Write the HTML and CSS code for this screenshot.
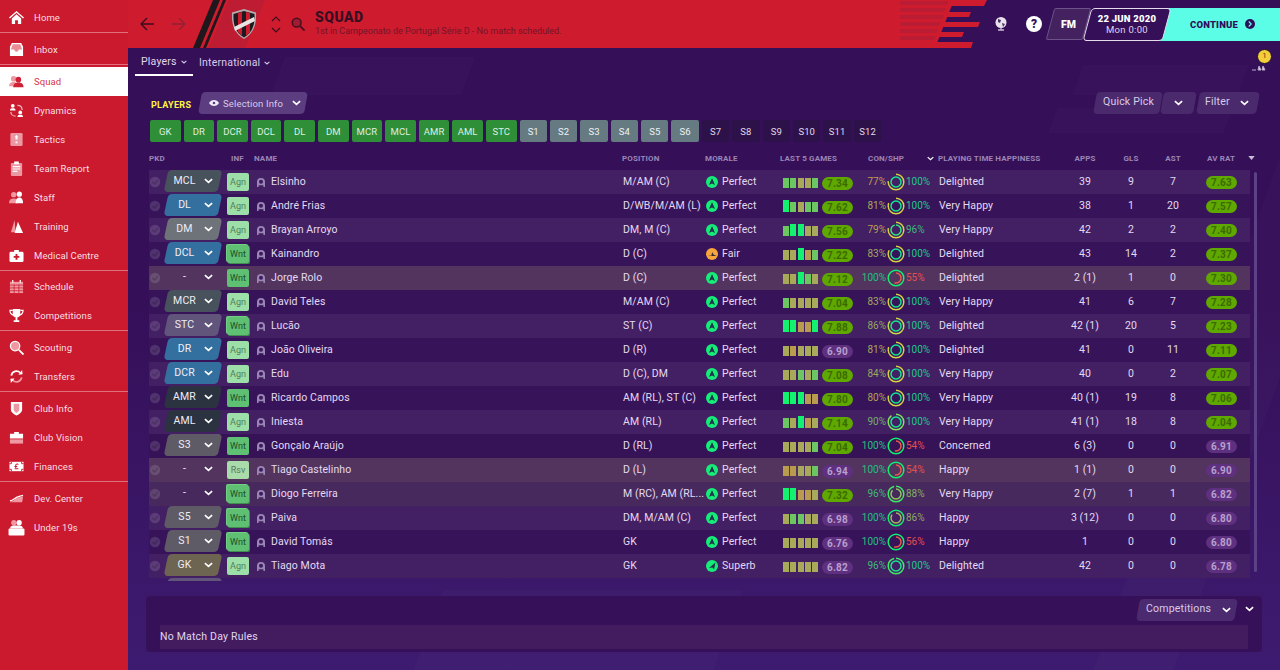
FILE: index.html
```html
<!DOCTYPE html>
<html lang="en">
<head>
<meta charset="utf-8">
<title>Squad</title>
<link rel="stylesheet" href="styles.css">
</head>
<body>
<svg class="defs" width="0" height="0" aria-hidden="true">
  <symbol id="chev" viewBox="0 0 10 6"><path d="M1 1l4 3.6L9 1" fill="none" stroke="currentColor" stroke-width="1.8"/></symbol>
  <symbol id="tick" viewBox="0 0 12 12"><circle cx="6" cy="6" r="5.200" fill="#fff" fill-opacity=".13"/><path d="M3.400 6l2 2 3.400-3.600" fill="none" stroke="#000" stroke-opacity=".22" stroke-width="1.200"/></symbol>
  <symbol id="head" viewBox="0 0 10 10"><path d="M1 10V5a4 4 0 0 1 8 0v5H7.400V8.200H2.600V10z" fill="#9a86b4"/><circle cx="5" cy="4.800" r="2" fill="#3c1a60"/></symbol>
  <symbol id="up" viewBox="0 0 12 12"><circle cx="6" cy="6" r="6" fill="#14ee78"/><path d="M6 2l3 7-3-1.400L3 9z" fill="#24304a"/></symbol>
  <symbol id="fair" viewBox="0 0 12 12"><circle cx="6" cy="6" r="6" fill="#f7a63c"/><path d="M1.500 8l4-.6.6-3.400 1.400 2.600 3 1.400z" fill="#3c2a3a"/></symbol>
  <symbol id="superb" viewBox="0 0 12 12"><circle cx="6" cy="6" r="6" fill="#14ee78"/><path d="M9.500 2.500L8 9.600 6.400 7.400 3 8z" fill="#24304a"/></symbol>
</svg>
<div class="app">
  <nav class="side">
    <div class="group first">
      <a class="item"><svg class="ic" viewBox="0 0 16 16"><path d="M8 1L0 8l1 1 7-6 7 6 1-1zM3 9v6h3.500v-4h3v4H13V9L8 4.600z" fill="#fff"/></svg><span>Home</span></a>
    </div>
    <div class="group">
      <a class="item"><svg class="ic" viewBox="0 0 16 16"><path d="M1 15V5l2-4h10l2 4v10z" fill="#fff"/><path d="M4 2.500h8L14 8h-3.600c-.4 1.600-1.200 2.300-2.400 2.300S6 9.600 5.600 8H2z" fill="#e88c96"/></svg><span>Inbox</span></a>
    </div>
    <div class="group squadgroup">
      <a class="item active"><svg class="ic" viewBox="0 0 16 16"><circle cx="5" cy="5" r="3" fill="#ef98a2"/><path d="M0 13c0-3 2-4.500 5-4.500S8 10 8 13z" fill="#ef98a2"/><circle cx="10" cy="6" r="3" fill="#d02035"/><path d="M4.500 14c0-3.500 2.500-5 5.500-5s5.500 1.500 5.500 5z" fill="#d02035"/></svg><span>Squad</span></a>
      <a class="item"><svg class="ic" viewBox="0 0 16 16"><circle cx="4" cy="3" r="2" fill="#fff"/><path d="M1 8c0-2 1-2.500 3-2.500S7 6 7 8z" fill="#fff"/><circle cx="12" cy="10" r="2" fill="#fff"/><path d="M9 15c0-2 1-2.500 3-2.500s3 .5 3 2.500z" fill="#fff"/><path d="M9 2.500c3 0 5 2 5 5M7 14c-3 0-5-2-5-4.500" fill="none" stroke="#f3b6bc" stroke-width="1.300"/></svg><span>Dynamics</span></a>
      <a class="item"><svg class="ic" viewBox="0 0 16 16"><rect x="1.500" y="1" width="13" height="14" rx="1.500" fill="#ec98a2"/><path d="M8 3l2 2.500H9V8H7V5.500H6zM7 10h2v2H7z" fill="#fff"/></svg><span>Tactics</span></a>
      <a class="item"><svg class="ic" viewBox="0 0 16 16"><rect x="2" y="2" width="12" height="14" rx="1" fill="#ec98a2"/><rect x="5.500" y="0.500" width="5" height="3" fill="#fff"/><path d="M4 6h8M4 8.500h8M4 11h5" stroke="#fff" stroke-width="1.200"/></svg><span>Team Report</span></a>
      <a class="item"><svg class="ic" viewBox="0 0 16 16"><circle cx="5" cy="5" r="2.800" fill="#ef98a2"/><path d="M0 14c0-3.500 2-5 5-5s4 1 4 5z" fill="#ef98a2"/><circle cx="11" cy="4.500" r="2.800" fill="#fff"/><path d="M7 14c0-4 1.500-6 4-6s4 2 4 6z" fill="#fff"/></svg><span>Staff</span></a>
      <a class="item"><svg class="ic" viewBox="0 0 16 16"><path d="M6 1l-4 13h5z" fill="#ef98a2"/><path d="M9.500 3L6 15h9z" fill="#fff"/></svg><span>Training</span></a>
      <a class="item"><svg class="ic" viewBox="0 0 16 16"><path d="M5.500 4V2h5v2H14a1.500 1.500 0 0 1 1.500 1.500v8A1.500 1.500 0 0 1 14 15H2a1.500 1.500 0 0 1-1.500-1.500v-8A1.500 1.500 0 0 1 2 4z" fill="#fff"/><path d="M7 6.500h2v2h2v2H9v2H7v-2H5v-2h2z" fill="#cb1a2d"/></svg><span>Medical Centre</span></a>
    </div>
    <div class="group">
      <a class="item"><svg class="ic" viewBox="0 0 16 16"><rect x="1" y="3" width="14" height="12" fill="#ef98a2"/><path d="M4 1v3M12 1v3" stroke="#fff" stroke-width="1.300"/><path d="M1 6.500h14M1 9.500h14M1 12.500h14M5.500 6v9M10.500 6v9" stroke="#cb1a2d" stroke-width=".8"/></svg><span>Schedule</span></a>
      <a class="item"><svg class="ic" viewBox="0 0 16 16"><path d="M4 1h8v5a4 4 0 0 1-8 0zM7 10h2v3h2v2H5v-2h2z" fill="#fff"/><path d="M4 2.500H1c0 3 1 4.500 3.500 5M12 2.500h3c0 3-1 4.500-3.500 5" fill="none" stroke="#fff" stroke-width="1.300"/></svg><span>Competitions</span></a>
    </div>
    <div class="group">
      <a class="item"><svg class="ic" viewBox="0 0 16 16"><circle cx="6.500" cy="6.500" r="5" fill="#ef98a2" stroke="#fff" stroke-width="1.300"/><path d="M10.500 10.500l5 5" stroke="#fff" stroke-width="2"/></svg><span>Scouting</span></a>
      <a class="item"><svg class="ic" viewBox="0 0 16 16"><path d="M2.500 7A5.500 5.500 0 0 1 12 4" fill="none" stroke="#fff" stroke-width="1.800"/><path d="M13.500 9A5.500 5.500 0 0 1 4 12" fill="none" stroke="#ef98a2" stroke-width="1.800"/><path d="M10 6l4.500-.5L14 1zM6 10l-4.500.5L2 15z" fill="#fff"/></svg><span>Transfers</span></a>
    </div>
    <div class="group">
      <a class="item"><svg class="ic" viewBox="0 0 16 16"><path d="M2 1h12v8c0 3-3 5-6 6.500C5 14 2 12 2 9z" fill="#fff"/><path d="M5 3h6v6c0 1.500-1.500 2.800-3 3.800C6.500 11.800 5 10.500 5 9z" fill="#ec98a2"/></svg><span>Club Info</span></a>
      <a class="item"><svg class="ic" viewBox="0 0 16 16"><path d="M5.500 4V2h5v2H15v5H1V4z" fill="#fff"/><path d="M1 10h14v4.500H1z" fill="#ef98a2"/></svg><span>Club Vision</span></a>
      <a class="item"><svg class="ic" viewBox="0 0 16 16"><rect x="0.500" y="3" width="15" height="10" fill="#fff"/><path d="M.5 5h2V3M15.500 5h-2V3M.5 11h2v2M15.500 11h-2v2" stroke="#cb1a2d" fill="none"/><path d="M10 6c-.5-1-2.500-1-2.800.4v3.200M5.800 8h3M6 10.500h4" stroke="#cb1a2d" fill="none" stroke-width="1.100"/></svg><span>Finances</span></a>
    </div>
    <div class="group last">
      <a class="item"><svg class="ic" viewBox="0 0 16 16"><path d="M1 11.500c4 0 5-3.500 9-4.500l5-1.500v1l-1 5.500H1z" fill="#ef98a2"/><path d="M1 10.500c4 0 5-3.500 9-4.500l5-1.500" fill="none" stroke="#fff" stroke-width="1.300"/></svg><span>Dev. Center</span></a>
      <a class="item"><svg class="ic wide" viewBox="0 0 16 16"><circle cx="5.500" cy="3.500" r="2.500" fill="#ef98a2"/><circle cx="10.500" cy="3.500" r="2.500" fill="#fff"/><path d="M2 9c0-2 1-3 3.500-3h5C13 6 14 7 14 9z" fill="#fff"/><rect x="0.500" y="9" width="15" height="6.500" rx="1" fill="#fff"/></svg><span>Under 19s</span></a>
    </div>
  </nav>

  <main class="main">
    <i class="deco d1"></i><i class="deco d2"></i><i class="deco d3"></i><i class="deco d4"></i><i class="deco d5"></i>
    <header class="top">
      <div class="red">
        <svg class="slash" viewBox="0 0 100 48" width="100" height="48"><path d="M16 48L36 0h36L52 48z" fill="#bd1c33"/><path d="M0 48L20 0h7L7 48zM10 48L30 0h3L13 48z" fill="#20171d"/></svg>
        <svg class="arrow" viewBox="0 0 16 16" width="16" height="16"><path d="M15 8H2M8 2L2 8l6 6" fill="none" stroke="#3d0d1c" stroke-width="1.400"/></svg>
        <svg class="arrow next" viewBox="0 0 16 16" width="16" height="16"><path d="M1 8h13M8 2l6 6-6 6" fill="none" stroke="#8f2234" stroke-width="1.300"/></svg>
        <svg class="crest" viewBox="0 0 26 32" width="26" height="32"><path d="M13 1l12 3.500c.5 10-1 20-12 26.500C2 24.500.5 14.500 1 4.500z" fill="#b5a9ad"/><path d="M13 3l10.500 3c.4 9-1 18-10.500 23.500C3.500 24 2.100 15 2.500 6z" fill="#1c1a1e"/><path d="M7 5l4-1v24l-4-4zM15 4l4 1v19l-4 4z" fill="#cf1b2e"/><path d="M3 19L23 9l1 4L4 23z" fill="#e8e4e4"/></svg>
        <div class="updown"><svg viewBox="0 0 10 6" width="10" height="6"><path d="M1 5l4-4 4 4" fill="none" stroke="#3d0d1c" stroke-width="1.200"/></svg><svg viewBox="0 0 10 6" width="10" height="6"><path d="M1 1l4 4 4-4" fill="none" stroke="#3d0d1c" stroke-width="1.200"/></svg></div>
        <svg class="search" viewBox="0 0 16 16" width="14" height="14"><circle cx="6.500" cy="6.500" r="5" fill="#a01c30" stroke="#4a0f1e" stroke-width="1.800"/><path d="M10.500 10.500l5 5" stroke="#4a0f1e" stroke-width="2.200"/></svg>
        <div class="heading"><h1>SQUAD</h1><p>1st in Campeonato de Portugal Série D - No match scheduled.</p></div>
      </div>
      <svg class="estripes" viewBox="0 0 90 48" width="90" height="48"><path d="M0 0h87l-3 6H0zM0 12h71l-2 5H0zM0 22h80l-2 5H0zM0 32h64l-2 5H0zM0 42h73l-2 6H0z" fill="#cf1b2e"/><path d="M0 0h54L35 48H0z" fill="#cf1b2e"/><path d="M0 1h48l-1 4H0zM0 8h46l-2 4H0zM0 15h44l-2 4H0zM0 22h41l-2 4H0zM0 29h38l-2 4H0zM0 36h36l-2 4H0z" fill="#b91c33"/></svg>
      <div class="tools">
        <svg class="globe" viewBox="0 0 16 16" width="16" height="16"><circle cx="8" cy="6.500" r="5.500" fill="#e8e2ee"/><path d="M5 3l3 1-1 3-2-1zM9 7l3 1-2 3z" fill="#4a3160"/><path d="M5 14h6M8 12v2" stroke="#c8bcd4" stroke-width="1.300"/></svg>
        <span class="help">?</span>
        <span class="fm">FM</span>
        <div class="date"><b>22 JUN 2020</b><span>Mon 0:00</span></div>
        <div class="continue"><b>CONTINUE</b><svg viewBox="0 0 12 12" width="10" height="10"><circle cx="6" cy="6" r="6" fill="#2d0f5a"/><path d="M4.500 3l3 3-3 3" fill="none" stroke="#5cfde6" stroke-width="1.400"/></svg></div>
      </div>
    </header>

    <div class="subnav">
      <a class="tab on">Players <svg class="c7"><use href="#chev"/></svg></a>
      <a class="tab">International <svg class="c7"><use href="#chev"/></svg></a>
      <div class="trophy"><svg viewBox="0 0 16 10" width="16" height="10"><path d="M1 9h4M7 9l1-4 2 4zM11 9l1-4 2 4z" stroke="#b6a8c8" fill="#e6dff0"/></svg><b>1</b></div>
    </div>

    <div class="toolbar">
      <span class="label">PLAYERS</span>
      <button class="btn sel"><svg viewBox="0 0 14 10" width="10" height="8"><path d="M0 5c3-5.500 11-5.500 14 0-3 5.500-11 5.500-14 0z" fill="#f0ebf5"/><circle cx="7" cy="5" r="1.800" fill="#5a3a7f"/></svg><span>Selection Info</span><svg class="c8"><use href="#chev"/></svg></button>
      <div class="spacer"></div>
      <button class="btn qp"><span>Quick Pick</span></button>
      <button class="btn qd"><svg class="c8"><use href="#chev"/></svg></button>
      <button class="btn fl"><span>Filter</span><svg class="c8"><use href="#chev"/></svg></button>
    </div>

    <div class="chips">
      <span class="chip g">GK</span><span class="chip g">DR</span><span class="chip g">DCR</span><span class="chip g">DCL</span><span class="chip g">DL</span><span class="chip g">DM</span><span class="chip g">MCR</span><span class="chip g">MCL</span><span class="chip g">AMR</span><span class="chip g">AML</span><span class="chip g">STC</span>
      <span class="chip s">S1</span><span class="chip s">S2</span><span class="chip s">S3</span><span class="chip s">S4</span><span class="chip s">S5</span><span class="chip s">S6</span>
      <span class="chip d">S7</span><span class="chip d">S8</span><span class="chip d">S9</span><span class="chip d">S10</span><span class="chip d">S11</span><span class="chip d">S12</span>
    </div>

    <div class="thead">
      <span>PKD</span><span>INF</span><span>NAME</span><span>POSITION</span><span>MORALE</span><span>LAST 5 GAMES</span><span>CON/SHP</span>
      <span class="sorted"><svg class="c7"><use href="#chev"/></svg>PLAYING TIME HAPPINESS</span>
      <span class="ctr">APPS</span><span class="ctr">GLS</span><span class="ctr">AST</span><span class="ctr">AV RAT</span>
      <svg class="caret" viewBox="0 0 8 5" width="7" height="4"><path d="M0 0h8L4 5z" fill="#c8bcd8"/></svg>
    </div>

    <div class="tablewrap">
    <div class="rows">

      <div class="row odd">
        <svg class="tick"><use href="#tick"/></svg><div class="pill slate"><span>MCL</span><svg class="c8"><use href="#chev"/></svg></div><span class="inf agn">Agn</span><svg class="hd"><use href="#head"/></svg><span class="name">Elsinho</span><span>M/AM (C)</span>
        <div class="morale"><svg><use href="#up"/></svg>Perfect</div>
        <div class="bars"><i class="m"></i><i class="m"></i><i class="y"></i><i class="y"></i><i class="m"></i></div><b class="rate hi">7.34</b>
        <span class="con" style="color:#c0a050">77%</span>
        <svg class="ring" viewBox="0 0 18 18"><circle cx="9" cy="9" r="7.800" pathLength="100" stroke-dasharray="77 100" stroke="#d8d040"/><circle cx="9" cy="9" r="4.700" pathLength="100" stroke-dasharray="100 100" stroke="#14e890"/></svg>
        <span class="shp" style="color:#20c888">100%</span><span>Delighted</span><span class="ctr">39</span><span class="ctr">9</span><span class="ctr">7</span><b class="rate av hi">7.63</b>
      </div>

      <div class="row">
        <svg class="tick"><use href="#tick"/></svg><div class="pill blue"><span>DL</span><svg class="c8"><use href="#chev"/></svg></div><span class="inf agn">Agn</span><svg class="hd"><use href="#head"/></svg><span class="name">André Frias</span><span>D/WB/M/AM (L)</span>
        <div class="morale"><svg><use href="#up"/></svg>Perfect</div>
        <div class="bars"><i class="t"></i><i class="m"></i><i class="y"></i><i class="m"></i><i class="m"></i></div><b class="rate hi">7.62</b>
        <span class="con" style="color:#a8a858">81%</span>
        <svg class="ring" viewBox="0 0 18 18"><circle cx="9" cy="9" r="7.800" pathLength="100" stroke-dasharray="81 100" stroke="#d8d040"/><circle cx="9" cy="9" r="4.700" pathLength="100" stroke-dasharray="100 100" stroke="#14e890"/></svg>
        <span class="shp" style="color:#20c888">100%</span><span>Very Happy</span><span class="ctr">38</span><span class="ctr">1</span><span class="ctr">20</span><b class="rate av hi">7.57</b>
      </div>

      <div class="row odd">
        <svg class="tick"><use href="#tick"/></svg><div class="pill grey"><span>DM</span><svg class="c8"><use href="#chev"/></svg></div><span class="inf agn">Agn</span><svg class="hd"><use href="#head"/></svg><span class="name">Brayan Arroyo</span><span>DM, M (C)</span>
        <div class="morale"><svg><use href="#up"/></svg>Perfect</div>
        <div class="bars"><i class="m"></i><i class="t"></i><i class="t"></i><i class="y"></i><i class="y"></i></div><b class="rate hi">7.56</b>
        <span class="con" style="color:#b8a050">79%</span>
        <svg class="ring" viewBox="0 0 18 18"><circle cx="9" cy="9" r="7.800" pathLength="100" stroke-dasharray="79 100" stroke="#d8d040"/><circle cx="9" cy="9" r="4.700" pathLength="100" stroke-dasharray="96 100" stroke="#30e880"/></svg>
        <span class="shp" style="color:#40b878">96%</span><span>Very Happy</span><span class="ctr">42</span><span class="ctr">2</span><span class="ctr">2</span><b class="rate av hi">7.40</b>
      </div>

      <div class="row">
        <svg class="tick"><use href="#tick"/></svg><div class="pill blue"><span>DCL</span><svg class="c8"><use href="#chev"/></svg></div><span class="inf wnt st">Wnt</span><svg class="hd"><use href="#head"/></svg><span class="name">Kainandro</span><span>D (C)</span>
        <div class="morale"><svg><use href="#fair"/></svg>Fair</div>
        <div class="bars"><i class="y"></i><i class="y"></i><i class="t"></i><i class="o"></i><i class="m"></i></div><b class="rate hi">7.22</b>
        <span class="con" style="color:#a0a860">83%</span>
        <svg class="ring" viewBox="0 0 18 18"><circle cx="9" cy="9" r="7.800" pathLength="100" stroke-dasharray="83 100" stroke="#d8d040"/><circle cx="9" cy="9" r="4.700" pathLength="100" stroke-dasharray="100 100" stroke="#14e890"/></svg>
        <span class="shp" style="color:#20c888">100%</span><span>Delighted</span><span class="ctr">43</span><span class="ctr">14</span><span class="ctr">2</span><b class="rate av hi">7.37</b>
      </div>

      <div class="row sel1">
        <svg class="tick"><use href="#tick"/></svg><div class="pill none"><span>-</span><svg class="c8"><use href="#chev"/></svg></div><span class="inf wnt">Wnt</span><svg class="hd"><use href="#head"/></svg><span class="name">Jorge Rolo</span><span>D (C)</span>
        <div class="morale"><svg><use href="#up"/></svg>Perfect</div>
        <div class="bars"><i class="y"></i><i class="y"></i><i class="t"></i><i class="m"></i><i class="y"></i></div><b class="rate hi">7.12</b>
        <span class="con" style="color:#20c080">100%</span>
        <svg class="ring" viewBox="0 0 18 18"><circle cx="9" cy="9" r="7.800" pathLength="100" stroke-dasharray="100 100" stroke="#14ee70"/><circle cx="9" cy="9" r="4.700" pathLength="100" stroke-dasharray="55 100" stroke="#f05848"/></svg>
        <span class="shp" style="color:#e05050">55%</span><span>Delighted</span><span class="ctr">2 (1)</span><span class="ctr">1</span><span class="ctr">0</span><b class="rate av hi">7.30</b>
      </div>

      <div class="row">
        <svg class="tick"><use href="#tick"/></svg><div class="pill slate"><span>MCR</span><svg class="c8"><use href="#chev"/></svg></div><span class="inf agn">Agn</span><svg class="hd"><use href="#head"/></svg><span class="name">David Teles</span><span>M/AM (C)</span>
        <div class="morale"><svg><use href="#up"/></svg>Perfect</div>
        <div class="bars"><i class="m"></i><i class="y"></i><i class="y"></i><i class="y"></i><i class="y"></i></div><b class="rate hi">7.04</b>
        <span class="con" style="color:#a0a860">83%</span>
        <svg class="ring" viewBox="0 0 18 18"><circle cx="9" cy="9" r="7.800" pathLength="100" stroke-dasharray="83 100" stroke="#d8d040"/><circle cx="9" cy="9" r="4.700" pathLength="100" stroke-dasharray="100 100" stroke="#14e890"/></svg>
        <span class="shp" style="color:#20c888">100%</span><span>Very Happy</span><span class="ctr">41</span><span class="ctr">6</span><span class="ctr">7</span><b class="rate av hi">7.28</b>
      </div>

      <div class="row odd">
        <svg class="tick"><use href="#tick"/></svg><div class="pill mauve"><span>STC</span><svg class="c8"><use href="#chev"/></svg></div><span class="inf wnt st">Wnt</span><svg class="hd"><use href="#head"/></svg><span class="name">Lucão</span><span>ST (C)</span>
        <div class="morale"><svg><use href="#up"/></svg>Perfect</div>
        <div class="bars"><i class="t"></i><i class="t"></i><i class="o"></i><i class="o"></i><i class="t"></i></div><b class="rate hi">7.88</b>
        <span class="con" style="color:#90a860">86%</span>
        <svg class="ring" viewBox="0 0 18 18"><circle cx="9" cy="9" r="7.800" pathLength="100" stroke-dasharray="86 100" stroke="#c8d848"/><circle cx="9" cy="9" r="4.700" pathLength="100" stroke-dasharray="100 100" stroke="#14e890"/></svg>
        <span class="shp" style="color:#20c888">100%</span><span>Delighted</span><span class="ctr">42 (1)</span><span class="ctr">20</span><span class="ctr">5</span><b class="rate av hi">7.23</b>
      </div>

      <div class="row">
        <svg class="tick"><use href="#tick"/></svg><div class="pill blue"><span>DR</span><svg class="c8"><use href="#chev"/></svg></div><span class="inf agn">Agn</span><svg class="hd"><use href="#head"/></svg><span class="name">João Oliveira</span><span>D (R)</span>
        <div class="morale"><svg><use href="#up"/></svg>Perfect</div>
        <div class="bars"><i class="y"></i><i class="o"></i><i class="y"></i><i class="y"></i><i class="y"></i></div><b class="rate lo">6.90</b>
        <span class="con" style="color:#a8a858">81%</span>
        <svg class="ring" viewBox="0 0 18 18"><circle cx="9" cy="9" r="7.800" pathLength="100" stroke-dasharray="81 100" stroke="#d8d040"/><circle cx="9" cy="9" r="4.700" pathLength="100" stroke-dasharray="100 100" stroke="#14e890"/></svg>
        <span class="shp" style="color:#20c888">100%</span><span>Delighted</span><span class="ctr">41</span><span class="ctr">0</span><span class="ctr">11</span><b class="rate av hi">7.11</b>
      </div>

      <div class="row odd">
        <svg class="tick"><use href="#tick"/></svg><div class="pill blue"><span>DCR</span><svg class="c8"><use href="#chev"/></svg></div><span class="inf agn">Agn</span><svg class="hd"><use href="#head"/></svg><span class="name">Edu</span><span>D (C), DM</span>
        <div class="morale"><svg><use href="#up"/></svg>Perfect</div>
        <div class="bars"><i class="y"></i><i class="y"></i><i class="m"></i><i class="y"></i><i class="m"></i></div><b class="rate hi">7.08</b>
        <span class="con" style="color:#98a860">84%</span>
        <svg class="ring" viewBox="0 0 18 18"><circle cx="9" cy="9" r="7.800" pathLength="100" stroke-dasharray="84 100" stroke="#d8d040"/><circle cx="9" cy="9" r="4.700" pathLength="100" stroke-dasharray="100 100" stroke="#14e890"/></svg>
        <span class="shp" style="color:#20c888">100%</span><span>Very Happy</span><span class="ctr">40</span><span class="ctr">0</span><span class="ctr">2</span><b class="rate av hi">7.07</b>
      </div>

      <div class="row">
        <svg class="tick"><use href="#tick"/></svg><div class="pill dark"><span>AMR</span><svg class="c8"><use href="#chev"/></svg></div><span class="inf wnt">Wnt</span><svg class="hd"><use href="#head"/></svg><span class="name">Ricardo Campos</span><span>AM (RL), ST (C)</span>
        <div class="morale"><svg><use href="#up"/></svg>Perfect</div>
        <div class="bars"><i class="t"></i><i class="t"></i><i class="t"></i><i class="o"></i><i class="o"></i></div><b class="rate hi">7.80</b>
        <span class="con" style="color:#b0a050">80%</span>
        <svg class="ring" viewBox="0 0 18 18"><circle cx="9" cy="9" r="7.800" pathLength="100" stroke-dasharray="80 100" stroke="#d8d040"/><circle cx="9" cy="9" r="4.700" pathLength="100" stroke-dasharray="100 100" stroke="#14e890"/></svg>
        <span class="shp" style="color:#20c888">100%</span><span>Very Happy</span><span class="ctr">40 (1)</span><span class="ctr">19</span><span class="ctr">8</span><b class="rate av hi">7.06</b>
      </div>

      <div class="row odd">
        <svg class="tick"><use href="#tick"/></svg><div class="pill dark"><span>AML</span><svg class="c8"><use href="#chev"/></svg></div><span class="inf agn">Agn</span><svg class="hd"><use href="#head"/></svg><span class="name">Iniesta</span><span>AM (RL)</span>
        <div class="morale"><svg><use href="#up"/></svg>Perfect</div>
        <div class="bars"><i class="m"></i><i class="y"></i><i class="t"></i><i class="o"></i><i class="y"></i></div><b class="rate hi">7.14</b>
        <span class="con" style="color:#70b068">90%</span>
        <svg class="ring" viewBox="0 0 18 18"><circle cx="9" cy="9" r="7.800" pathLength="100" stroke-dasharray="90 100" stroke="#80e060"/><circle cx="9" cy="9" r="4.700" pathLength="100" stroke-dasharray="100 100" stroke="#14e890"/></svg>
        <span class="shp" style="color:#20c888">100%</span><span>Very Happy</span><span class="ctr">41 (1)</span><span class="ctr">18</span><span class="ctr">8</span><b class="rate av hi">7.04</b>
      </div>

      <div class="row dk">
        <svg class="tick"><use href="#tick"/></svg><div class="pill grey2"><span>S3</span><svg class="c8"><use href="#chev"/></svg></div><span class="inf wnt">Wnt</span><svg class="hd"><use href="#head"/></svg><span class="name">Gonçalo Araújo</span><span>D (RL)</span>
        <div class="morale"><svg><use href="#up"/></svg>Perfect</div>
        <div class="bars"><i class="y"></i><i class="y"></i><i class="y"></i><i class="y"></i><i class="m"></i></div><b class="rate hi">7.04</b>
        <span class="con" style="color:#20c080">100%</span>
        <svg class="ring" viewBox="0 0 18 18"><circle cx="9" cy="9" r="7.800" pathLength="100" stroke-dasharray="100 100" stroke="#14ee70"/><circle cx="9" cy="9" r="4.700" pathLength="100" stroke-dasharray="54 100" stroke="#f05848"/></svg>
        <span class="shp" style="color:#e05050">54%</span><span>Concerned</span><span class="ctr">6 (3)</span><span class="ctr">0</span><span class="ctr">0</span><b class="rate av lo">6.91</b>
      </div>

      <div class="row sel1">
        <svg class="tick"><use href="#tick"/></svg><div class="pill none"><span>-</span><svg class="c8"><use href="#chev"/></svg></div><span class="inf rsv">Rsv</span><svg class="hd"><use href="#head"/></svg><span class="name">Tiago Castelinho</span><span>D (L)</span>
        <div class="morale"><svg><use href="#up"/></svg>Perfect</div>
        <div class="bars"><i class="o"></i><i class="o"></i><i class="y"></i><i class="y"></i><i class="m"></i></div><b class="rate lo">6.94</b>
        <span class="con" style="color:#20c080">100%</span>
        <svg class="ring" viewBox="0 0 18 18"><circle cx="9" cy="9" r="7.800" pathLength="100" stroke-dasharray="100 100" stroke="#14ee70"/><circle cx="9" cy="9" r="4.700" pathLength="100" stroke-dasharray="54 100" stroke="#f05848"/></svg>
        <span class="shp" style="color:#e05050">54%</span><span>Happy</span><span class="ctr">1 (1)</span><span class="ctr">0</span><span class="ctr">0</span><b class="rate av lo">6.90</b>
      </div>

      <div class="row sel2">
        <svg class="tick"><use href="#tick"/></svg><div class="pill none"><span>-</span><svg class="c8"><use href="#chev"/></svg></div><span class="inf wnt st">Wnt</span><svg class="hd"><use href="#head"/></svg><span class="name">Diogo Ferreira</span><span>M (RC), AM (RL...</span>
        <div class="morale"><svg><use href="#up"/></svg>Perfect</div>
        <div class="bars"><i class="t"></i><i class="t"></i><i class="o"></i><i class="o"></i><i class="y"></i></div><b class="rate hi">7.32</b>
        <span class="con" style="color:#40b878">96%</span>
        <svg class="ring" viewBox="0 0 18 18"><circle cx="9" cy="9" r="7.800" pathLength="100" stroke-dasharray="96 100" stroke="#40e868"/><circle cx="9" cy="9" r="4.700" pathLength="100" stroke-dasharray="88 100" stroke="#90c860"/></svg>
        <span class="shp" style="color:#80b060">88%</span><span>Very Happy</span><span class="ctr">2 (7)</span><span class="ctr">1</span><span class="ctr">1</span><b class="rate av lo">6.82</b>
      </div>

      <div class="row odd">
        <svg class="tick"><use href="#tick"/></svg><div class="pill grey2"><span>S5</span><svg class="c8"><use href="#chev"/></svg></div><span class="inf wnt st">Wnt</span><svg class="hd"><use href="#head"/></svg><span class="name">Paiva</span><span>DM, M/AM (C)</span>
        <div class="morale"><svg><use href="#up"/></svg>Perfect</div>
        <div class="bars"><i class="y"></i><i class="m"></i><i class="m"></i><i class="y"></i><i class="y"></i></div><b class="rate lo">6.98</b>
        <span class="con" style="color:#20c080">100%</span>
        <svg class="ring" viewBox="0 0 18 18"><circle cx="9" cy="9" r="7.800" pathLength="100" stroke-dasharray="100 100" stroke="#14ee70"/><circle cx="9" cy="9" r="4.700" pathLength="100" stroke-dasharray="86 100" stroke="#a8b860"/></svg>
        <span class="shp" style="color:#90a860">86%</span><span>Happy</span><span class="ctr">3 (12)</span><span class="ctr">0</span><span class="ctr">0</span><b class="rate av lo">6.80</b>
      </div>

      <div class="row">
        <svg class="tick"><use href="#tick"/></svg><div class="pill grey2"><span>S1</span><svg class="c8"><use href="#chev"/></svg></div><span class="inf wnt st">Wnt</span><svg class="hd"><use href="#head"/></svg><span class="name">David Tomás</span><span>GK</span>
        <div class="morale"><svg><use href="#up"/></svg>Perfect</div>
        <div class="bars"><i class="y"></i><i class="y"></i><i class="y"></i><i class="y"></i><i class="y"></i></div><b class="rate lo">6.76</b>
        <span class="con" style="color:#20c080">100%</span>
        <svg class="ring" viewBox="0 0 18 18"><circle cx="9" cy="9" r="7.800" pathLength="100" stroke-dasharray="100 100" stroke="#14ee70"/><circle cx="9" cy="9" r="4.700" pathLength="100" stroke-dasharray="56 100" stroke="#f05848"/></svg>
        <span class="shp" style="color:#e05050">56%</span><span>Happy</span><span class="ctr">1</span><span class="ctr">0</span><span class="ctr">0</span><b class="rate av lo">6.80</b>
      </div>

      <div class="row odd">
        <svg class="tick"><use href="#tick"/></svg><div class="pill olive"><span>GK</span><svg class="c8"><use href="#chev"/></svg></div><span class="inf agn">Agn</span><svg class="hd"><use href="#head"/></svg><span class="name">Tiago Mota</span><span>GK</span>
        <div class="morale"><svg><use href="#superb"/></svg>Superb</div>
        <div class="bars"><i class="y"></i><i class="y"></i><i class="y"></i><i class="y"></i><i class="y"></i></div><b class="rate lo">6.82</b>
        <span class="con" style="color:#40b878">96%</span>
        <svg class="ring" viewBox="0 0 18 18"><circle cx="9" cy="9" r="7.800" pathLength="100" stroke-dasharray="96 100" stroke="#40e868"/><circle cx="9" cy="9" r="4.700" pathLength="100" stroke-dasharray="100 100" stroke="#14e890"/></svg>
        <span class="shp" style="color:#20c888">100%</span><span>Delighted</span><span class="ctr">42</span><span class="ctr">0</span><span class="ctr">0</span><b class="rate av lo">6.78</b>
      </div>

      <div class="row clipped"><span></span><div class="pill mauve"></div></div>
    </div>
    <div class="scroll"></div>
    </div>

    <section class="panel">
      <div class="panelhead">
        <button class="btn comp"><span>Competitions</span><svg class="c8"><use href="#chev"/></svg></button>
        <svg class="c8 pc"><use href="#chev"/></svg>
      </div>
      <div class="rules">No Match Day Rules</div>
    </section>
  </main>
</div>
</body>
</html>
```
FILE: styles.css
```css
* { box-sizing: border-box; }
html, body { margin: 0; height: 670px; overflow: hidden; }
body { font-family: Roboto, "Liberation Sans", sans-serif; font-size: 11px; color: #e4daf0; background: #350f58; }
.defs { position: absolute; }
svg { display: block; flex: none; }
a { display: block; }
button { font: inherit; color: inherit; border: 0; background: none; padding: 0; white-space: nowrap; }

.app { display: flex; height: 670px; }

/* sidebar */
.side { width: 128px; flex: none; height: 670px; background: #cb1a2d; color: #f9dfe2; font-size: 9.500px; letter-spacing: .1px; }
.group { padding-top: 2px; border-bottom: 1px solid rgba(255,255,255,.38); }
.group.first { padding-top: 3px; }
.group.last { border-bottom: 0; }
.squadgroup { padding-top: 1px; margin-top: 1px; margin-bottom: -1px; border-top: 0; }
.item { display: flex; align-items: center; height: 29px; padding-left: 9px; gap: 10px; }
.item .ic { width: 15px; height: 15px; }
.item .ic.wide { width: 17px; height: 17px; margin-left: -1px; margin-right: -1px; }
.item.active { background: #fff; color: #d8334a; border-bottom: 1px solid #fff; }
.item.active span { margin-top: 1px; }

/* main */
.main { position: relative; flex: 1; min-width: 0; overflow: hidden; display: flex; flex-direction: column; background: linear-gradient(#350f58 0, #350f58 45%, #3d1b70 100%); }
.deco { position: absolute; background: rgba(255,255,255,.018); transform: skewX(-20deg); }
.d1 { left: 950px; top: 65px; width: 165px; height: 30px; }
.d2 { left: 925px; top: 108px; width: 175px; height: 25px; }
.d3 { left: 150px; top: 57px; width: 190px; height: 38px; }
.d4 { left: 300px; top: 590px; width: 300px; height: 80px; }
.d5 { left: 1060px; top: 150px; width: 80px; height: 520px; }

/* top bar */
.top { position: relative; display: flex; height: 48px; flex: none; }
.red { position: relative; display: flex; align-items: center; width: 772px; background: #cf1b2e; color: #3d0d1c; }
.slash { position: absolute; left: 65px; top: 0; }
.arrow { position: relative; margin-left: 11px; }
.arrow.next { margin-left: 16px; }
.crest { position: relative; margin-left: 44px; }
.updown { position: relative; margin-left: 14px; display: flex; flex-direction: column; gap: 5px; }
.search { position: relative; margin-left: 10px; }
.heading { position: relative; margin-left: 10px; }
.heading h1 { margin: 0; font-size: 14px; font-weight: 900; letter-spacing: .5px; line-height: 15px; color: #3a0e22; }
.heading p { margin: 0; font-size: 9px; line-height: 13px; color: #731528; white-space: nowrap; }
.tools { flex: 1; display: flex; align-items: center; min-width: 0; }
.globe { margin-left: 3px; }
.help { margin-left: 17px; width: 16px; height: 16px; border-radius: 50%; background: #fff; color: #350f58; font-weight: 900; font-size: 12px; line-height: 16px; text-align: center; }
.fm { margin-left: 8px; width: 37px; height: 32px; display: flex; align-items: center; justify-content: center; color: #fff; font-weight: 900; font-size: 10.500px; position: relative; z-index: 0; }
.fm::before { content: ""; position: absolute; inset: 0; background: #43225f; border: 1px solid #6c5288; border-radius: 2px; transform: skewX(-15deg); z-index: -1; }
.date { position: relative; z-index: 1; width: 80px; height: 33px; display: flex; flex-direction: column; align-items: center; justify-content: center; color: #e0d4ec; font-size: 9.500px; line-height: 11px; letter-spacing: .3px; }
.date b { color: #fff; font-weight: 900; letter-spacing: .2px; }
.date::before { content: ""; position: absolute; inset: 0; background: #350f58; border: 1px solid #e4dcea; border-radius: 4px; transform: skewX(-15deg); z-index: -1; }
.continue { flex: 1; height: 33px; margin-left: -10px; padding-left: 33px; display: flex; align-items: center; gap: 7px; background: #5cfde6; color: #2d0f5a; font-size: 9.500px; letter-spacing: .2px; }
.continue b { font-weight: 900; }

/* sub nav */
.subnav { position: relative; flex: none; height: 28px; display: flex; padding-left: 7px; }
.tab { display: flex; align-items: center; gap: 4px; height: 28px; padding: 1px 6px 0; color: #d8cbe8; font-size: 10.500px; letter-spacing: .2px; white-space: nowrap; }
.tab.on { width: 58px; border-bottom: 2px solid #fff; color: #e0d8ea; }
.c7 { width: 6px; height: 4px; color: #d8cbe8; }
.c8 { width: 9px; height: 6px; color: #fff; }
.trophy { position: absolute; right: 9px; top: 1px; width: 18px; height: 22px; }
.trophy svg { position: absolute; left: -2px; bottom: 0; }
.trophy b { position: absolute; right: -1px; top: 0; width: 15px; height: 15px; border-radius: 50%; background: #f3cd3a; border: 1.500px solid #1d1030; color: #5a4210; font-size: 8px; font-weight: 400; line-height: 12px; text-align: center; }

/* toolbar */
.toolbar { position: relative; flex: none; height: 22px; margin-top: 16px; padding-left: 23px; padding-right: 22px; display: flex; align-items: center; }
.label { width: 46px; margin-top: 3px; color: #fff53c; font-size: 9px; font-weight: 700; letter-spacing: .3px; }
.btn { position: relative; z-index: 0; height: 22px; display: flex; align-items: center; color: #d8cbe8; font-size: 10.500px; letter-spacing: .2px; }
.btn span { margin-top: -3px; }
.btn::before { content: ""; position: absolute; inset: 0; border-radius: 4px; background: #4a2a6c; transform: skewX(-10deg); z-index: -1; }
.sel { margin-left: 3px; width: 106px; padding-left: 9px; gap: 4px; }
.sel span { margin-top: 0; font-size: 9.500px; letter-spacing: .15px; }
.sel::before { background: #5b3d80; }
.sel .c8 { margin-left: 5px; }
.spacer { flex: 1; }
.qp { width: 66px; padding-left: 8px; }
.qd { width: 33px; margin-left: 1px; justify-content: center; }
.fl { width: 60px; margin-left: 3px; padding-left: 7px; justify-content: space-between; padding-right: 9px; }

/* chips */
.chips { position: relative; flex: none; display: flex; gap: 3px; height: 22px; margin-top: 6px; padding-left: 22px; }
.chip { width: 30.600px; height: 22px; border-radius: 2px; display: flex; align-items: center; justify-content: center; font-size: 9.500px; letter-spacing: .1px; color: #dfeee0; }
.chip.g { background: #2f8f38; }
.chip.s { width: 27.400px; background: #667a82; color: #eef2f4; }
.chip.d { width: 27.400px; background: #2d1249; color: #e0d8ea; }

/* table header */
.thead { position: relative; flex: none; height: 28px; padding-top: 4px; display: grid; grid-template-columns: 82px 23px 368px 83px 75px 88px 59px 133px 50px 42px 42px 54px; align-items: center; padding-left: 21px; color: #9b86b6; font-size: 8px; font-weight: 700; letter-spacing: .15px; white-space: nowrap; }
.sorted { display: flex; align-items: center; gap: 4px; }
.sorted .c7 { color: #fff; width: 7px; height: 5px; }
.ctr { text-align: center; }
.caret { position: absolute; left: 1120px; top: 14px; }

/* rows */
.tablewrap { position: relative; flex: none; height: 411px; margin-left: 21px; margin-right: 30px; }
.rows { height: 411px; overflow: hidden; }
.row { height: 24px; display: grid; grid-template-rows: 22px; grid-template-columns: 14px 64px 22px 22px 352px 82px 78px 39px 34px 30px 20px 33px 121px 50px 42px 42px 54px; align-items: center; font-size: 10.500px; letter-spacing: .1px; white-space: nowrap; background: #37145a; }
.odd { background: #431f64; }
.dk { background: #361357; }
.sel1 { background: #53345f; }
.sel2 { background: #48295e; }
.tick { align-self: start; width: 12px; height: 12px; margin-top: 6px; }
.pill { align-self: start; position: relative; z-index: 0; width: 54px; height: 22px; margin-left: 3px; display: flex; align-items: center; color: #f0ecf4; font-size: 10.500px; }
.pill::before { content: ""; position: absolute; inset: 0; border-radius: 4px; transform: skewX(-12deg); z-index: -1; }
.pill span { width: 37px; text-align: center; margin-top: -2px; }
.pill .c8 { margin-left: 1px; }
.slate::before { background: #47525c; }
.blue::before { background: #34709f; }
.grey::before { background: #6e737a; }
.grey2::before { background: #5e5b66; }
.mauve::before { background: #61557c; }
.dark::before { background: #2b3340; }
.olive::before { background: #6d6452; }
.inf { align-self: start; margin-top: 3px; width: 22px; height: 18px; border-radius: 2px; display: flex; align-items: center; justify-content: center; font-size: 9px; letter-spacing: 0; }
.agn { background: #9ddfa9; color: #4f7d58; }
.rsv { background: #a9dcaa; color: #55785a; }
.wnt { background: #5fbf72; color: #20502c; }
.wnt.st { box-shadow: -1px -1px 0 #72cf84, 1px 1px 0 #3f8f52; }
.hd { align-self: start; width: 10px; height: 10px; margin-left: 7px; margin-top: 7px; }
.morale { display: flex; align-items: center; gap: 4px; }
.morale svg { width: 12px; height: 12px; margin-left: 1px; margin-top: 2px; }
.bars { align-self: start; display: flex; align-items: flex-end; gap: 1.300px; height: 24px; padding: 6px 0; }
.bars i { display: block; width: 6px; height: 10px; background: #a9a95c; }
.bars .m { background: #6cc763; }
.bars .y { background: #a9a95c; }
.bars .o { background: #b99b50; }
.bars .t { height: 12px; background: #14f070; }
.rate { align-self: start; margin-top: 7px; width: 31px; height: 13px; border-radius: 7px; display: flex; align-items: center; justify-content: center; font-size: 10px; font-weight: 700; letter-spacing: .2px; }
.rate.hi { background: #5fa800; color: #3c6a00; }
.rate.lo { background: #5f2f80; color: #b7a0cf; }
.rate.av { margin-left: 12px; margin-top: 6px; }
.con { text-align: right; font-size: 10px; letter-spacing: 0; }
.shp { font-size: 10px; letter-spacing: 0; }
.ring { align-self: start; margin-top: 3px; width: 18px; height: 18px; margin-left: 1px; fill: none; stroke-width: 1.500; transform: rotate(-90deg); }
.ring circle + circle { r: 5px; }
.clipped { grid-template-columns: 14px 64px; align-items: start; background: none; }
.scroll { position: absolute; left: 1105px; top: 2px; width: 3px; height: 400px; border-radius: 2px; background: #5c4186; }

/* bottom panel */
.panel { position: relative; flex: none; width: 1116px; height: 56px; margin-top: 15px; margin-left: 18px; padding-top: 3px; background: #36115a; border-radius: 4px; }
.panelhead { height: 26px; display: flex; justify-content: flex-end; align-items: flex-start; padding-right: 8px; gap: 9px; }
.comp { width: 98px; padding-left: 8px; gap: 11px; justify-content: flex-start; }
.comp::before { background: #4c2a70; }
.pc { margin-top: 7px; }
.rules { height: 24px; margin: 0 14px; background: #431c60; display: flex; align-items: center; padding-bottom: 2px; color: #e0d6ec; font-size: 10.500px; letter-spacing: .2px; }
```
